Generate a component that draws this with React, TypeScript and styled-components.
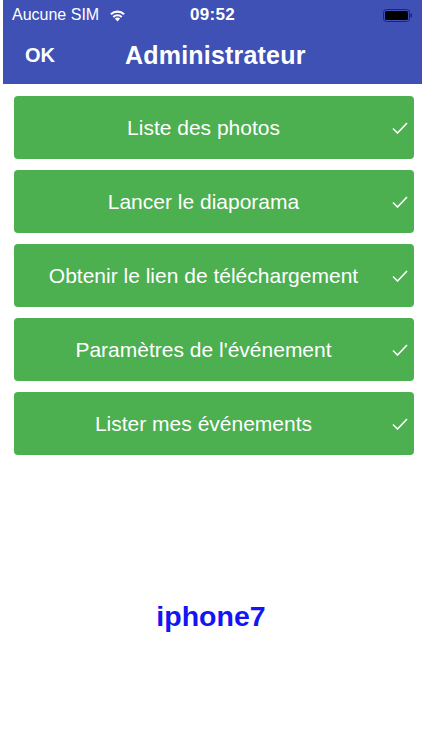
import styled, { createGlobalStyle } from 'styled-components'

const GlobalStyle = createGlobalStyle`
	html, body {
		margin: 0;
		padding: 0;
		background: #ffffff;
		font-family: 'Liberation Sans', Arial, sans-serif;
	}
`

const MENU_ITEMS = [
	'Liste des photos',
	'Lancer le diaporama',
	'Obtenir le lien de téléchargement',
	"Paramètres de l'événement",
	'Lister mes événements'
]

const WifiIcon = () => (
	<svg width="17" height="13" viewBox="0 0 17 13">
		<path d="M8.5 12.5 L5.9 9.6 A3.8 3.8 0 0 1 11.1 9.6 Z" fill="#fff" />
		<path d="M3.6 7.2 A7 7 0 0 1 13.4 7.2 L12 8.7 A5 5 0 0 0 5 8.7 Z" fill="#fff" />
		<path d="M1.2 4.6 A10.4 10.4 0 0 1 15.8 4.6 L14.4 6.1 A8.4 8.4 0 0 0 2.6 6.1 Z" fill="#fff" />
	</svg>
)

const BatteryIcon = () => (
	<svg width="30" height="13" viewBox="0 0 30 13">
		<rect x="0.5" y="0.5" width="26" height="12" rx="3" fill="none" stroke="#1a237e" strokeWidth="1" />
		<rect x="2" y="2" width="23" height="9" rx="1.5" fill="#000" />
		<rect x="27.5" y="4.5" width="1.5" height="4" rx="0.7" fill="#1a237e" />
	</svg>
)

const CheckIcon = () => (
	<svg width="16" height="12" viewBox="0 0 16 12">
		<polyline points="1,6.5 5.5,11 15,1" fill="none" stroke="#fff" strokeWidth="1.6" />
	</svg>
)

const App = () => {
	return (
		<>
			<GlobalStyle />
			<S.Page>
				<S.Header>
					<S.StatusBar>
						<S.StatusLeft>
							<S.Carrier>Aucune SIM</S.Carrier>
							<WifiIcon />
						</S.StatusLeft>
						<S.Clock>09:52</S.Clock>
						<S.StatusRight>
							<BatteryIcon />
						</S.StatusRight>
					</S.StatusBar>
					<S.NavBar>
						<S.OkButton>OK</S.OkButton>
						<S.Title>Administrateur</S.Title>
					</S.NavBar>
				</S.Header>

				<S.MenuList>
					{MENU_ITEMS.map((label) => (
						<S.MenuButton key={label}>
							<S.MenuLabel>{label}</S.MenuLabel>
							<S.CheckSlot>
								<CheckIcon />
							</S.CheckSlot>
						</S.MenuButton>
					))}
				</S.MenuList>

				<S.Footer>
					<S.DeviceName>iphone7</S.DeviceName>
				</S.Footer>
			</S.Page>
		</>
	)
}

export default App

const Page = styled.div`
	width: 422px;
	height: 750px;
	display: flex;
	flex-direction: column;
	overflow: hidden;
`

const Header = styled.header`
	margin-left: 3px;
	height: 84px;
	background-color: #3f51b5;
	color: #ffffff;
	display: flex;
	flex-direction: column;
`

const StatusBar = styled.div`
	height: 30px;
	display: grid;
	grid-template-columns: 1fr auto 1fr;
	align-items: center;
	padding: 0 9px 0 9px;
`

const StatusLeft = styled.div`
	display: flex;
	align-items: center;
	gap: 10px;
`

const Carrier = styled.span`
	font-size: 16px;
`

const Clock = styled.span`
	font-size: 17px;
	font-weight: bold;
	letter-spacing: 0.3px;
`

const StatusRight = styled.div`
	display: flex;
	justify-content: flex-end;
	align-items: center;
`

const NavBar = styled.div`
	flex: 1;
	display: flex;
	align-items: center;
	padding-left: 22px;
	padding-bottom: 4px;
`

const OkButton = styled.span`
	font-size: 20px;
	font-weight: bold;
	width: 100px;
`

const Title = styled.h1`
	margin: 0;
	font-size: 25px;
	font-weight: bold;
	letter-spacing: 0.2px;
`

const MenuList = styled.div`
	display: flex;
	flex-direction: column;
	gap: 11px;
	padding: 12px 8px 0 14px;
`

const MenuButton = styled.div`
	height: 63px;
	border-radius: 4px;
	background-color: #4caf50;
	color: #ffffff;
	display: flex;
	align-items: center;
`

const MenuLabel = styled.span`
	flex: 1;
	text-align: center;
	font-size: 21px;
`

const CheckSlot = styled.span`
	width: 22px;
	display: flex;
	justify-content: flex-start;
	align-items: center;
	margin-left: -1px;
`

const Footer = styled.div`
	display: flex;
	justify-content: center;
	padding-top: 145px;
`

const DeviceName = styled.span`
	font-size: 28.5px;
	font-weight: bold;
	color: #1414f5;
`

const S = {
	Page,
	Header,
	StatusBar,
	StatusLeft,
	Carrier,
	Clock,
	StatusRight,
	NavBar,
	OkButton,
	Title,
	MenuList,
	MenuButton,
	MenuLabel,
	CheckSlot,
	Footer,
	DeviceName
}
